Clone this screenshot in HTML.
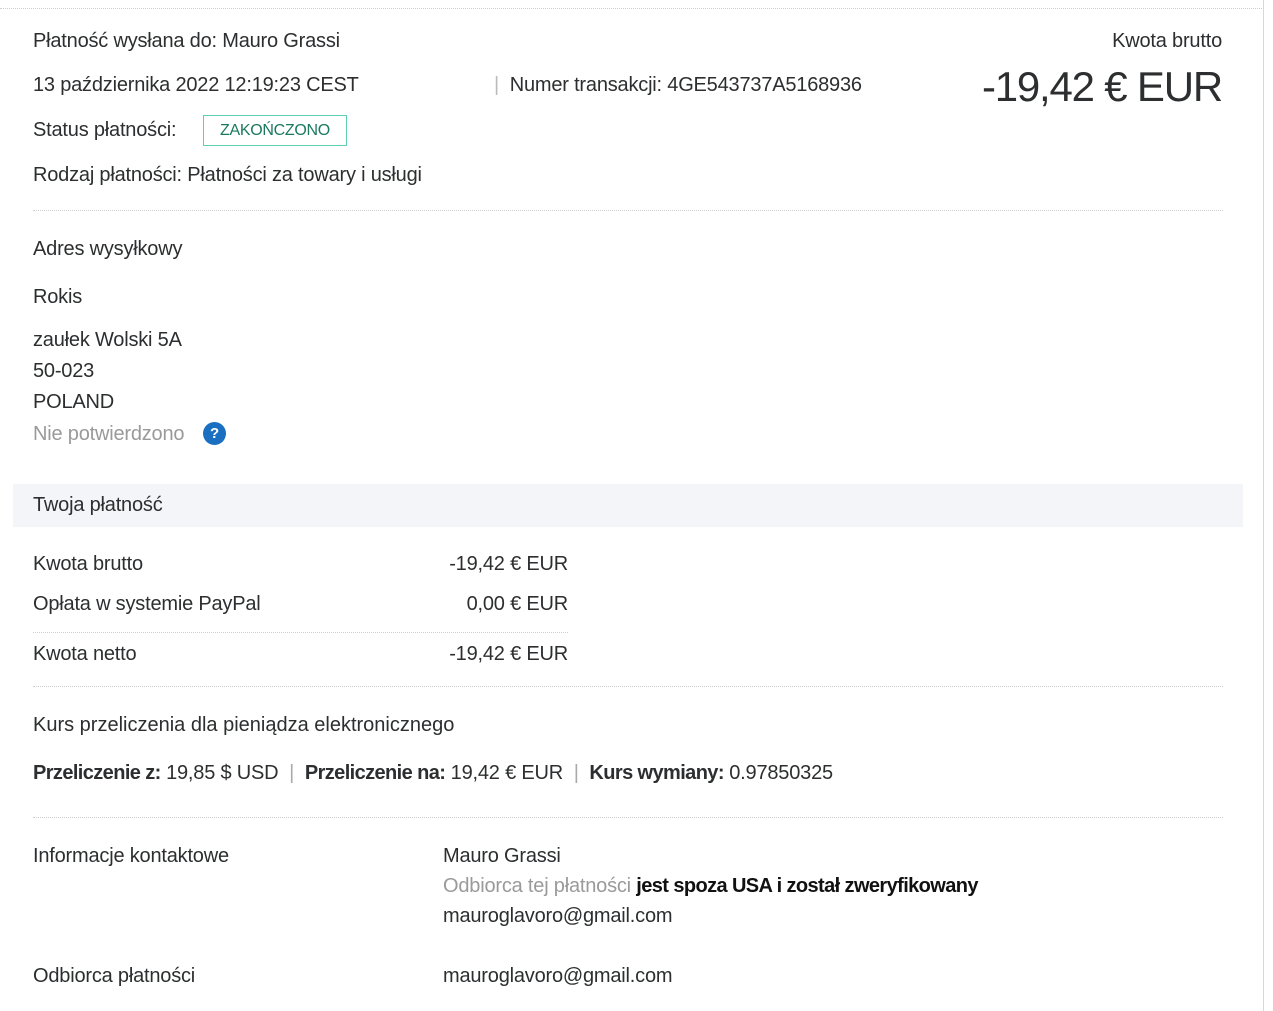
<!DOCTYPE html>
<html><head><meta charset="utf-8"><style>
html,body{margin:0;padding:0;background:#fff;width:1273px;height:1011px;overflow:hidden;position:relative}
body{font-family:"Liberation Sans",sans-serif;color:#2c2e2f;font-size:20px;letter-spacing:-0.2px}
.t{position:absolute;white-space:nowrap;line-height:24px}
.hr{position:absolute;height:0;border-top:1px dotted #cfcfcf}
b{font-weight:bold;letter-spacing:-0.6px}
.g{color:#9a9a9a}
</style></head><body>
<div class="hr" style="left:0;top:8px;width:1262px"></div>
<div style="position:absolute;left:1263px;top:0;width:1px;height:1011px;background:#d8d8d8"></div>

<div class="t" style="left:33px;top:29px">Płatność wysłana do: Mauro Grassi</div>
<div class="t" style="left:33px;top:73px">13 października 2022 12:19:23 CEST</div>
<div class="t" style="left:494px;top:73px"><span style="color:#bbb">|</span>&nbsp; Numer transakcji: 4GE543737A5168936</div>
<div class="t" style="left:33px;top:118px">Status płatności:</div>
<div style="position:absolute;left:203px;top:115px;width:142px;height:29px;border:1.5px solid #5fcfb2;color:#1b7a5e;font-size:16px;line-height:29px;text-align:center;letter-spacing:-0.3px">ZAKOŃCZONO</div>
<div class="t" style="left:33px;top:163px">Rodzaj płatności: Płatności za towary i usługi</div>
<div class="t" style="right:51px;top:29px">Kwota brutto</div>
<div class="t" style="right:51px;top:66px;font-size:42px;line-height:42px;letter-spacing:-1.2px">-19,42 € EUR</div>
<div class="hr" style="left:33px;top:210px;width:1190px"></div>

<div class="t" style="left:33px;top:237px">Adres wysyłkowy</div>
<div class="t" style="left:33px;top:285px">Rokis</div>
<div class="t" style="left:33px;top:328px">zaułek Wolski 5A</div>
<div class="t" style="left:33px;top:359px">50-023</div>
<div class="t" style="left:33px;top:390px">POLAND</div>
<div class="t g" style="left:33px;top:422px">Nie potwierdzono</div>
<div style="position:absolute;left:203px;top:422px;width:23px;height:23px;border-radius:50%;background:#1a6fc1;color:#fff;font-size:15px;font-weight:bold;line-height:23px;text-align:center">?</div>

<div style="position:absolute;left:13px;top:484px;width:1230px;height:43px;background:#f3f5f8"></div>
<div class="t" style="left:33px;top:493px">Twoja płatność</div>

<div class="t" style="left:33px;top:552px">Kwota brutto</div>
<div class="t" style="right:705px;top:552px">-19,42 € EUR</div>
<div class="t" style="left:33px;top:592px">Opłata w systemie PayPal</div>
<div class="t" style="right:705px;top:592px">0,00 € EUR</div>
<div class="hr" style="left:33px;top:632px;width:535px"></div>
<div class="t" style="left:33px;top:642px">Kwota netto</div>
<div class="t" style="right:705px;top:642px">-19,42 € EUR</div>
<div class="hr" style="left:33px;top:686px;width:1190px"></div>

<div class="t" style="left:33px;top:713px;letter-spacing:0">Kurs przeliczenia dla pieniądza elektronicznego</div>
<div class="t" style="left:33px;top:761px"><b>Przeliczenie z:</b> 19,85 $ USD <span style="color:#aaa">&nbsp;|&nbsp;</span> <b>Przeliczenie na:</b> 19,42 € EUR <span style="color:#aaa">&nbsp;|&nbsp;</span> <b>Kurs wymiany:</b> 0.97850325</div>
<div class="hr" style="left:33px;top:817px;width:1190px"></div>

<div class="t" style="left:33px;top:844px">Informacje kontaktowe</div>
<div class="t" style="left:443px;top:844px">Mauro Grassi</div>
<div class="t" style="left:443px;top:874px"><span class="g">Odbiorca tej płatności</span> <b style="color:#111">jest spoza USA i został zweryfikowany</b></div>
<div class="t" style="left:443px;top:904px">mauroglavoro@gmail.com</div>
<div class="t" style="left:33px;top:964px">Odbiorca płatności</div>
<div class="t" style="left:443px;top:964px">mauroglavoro@gmail.com</div>
</body></html>
